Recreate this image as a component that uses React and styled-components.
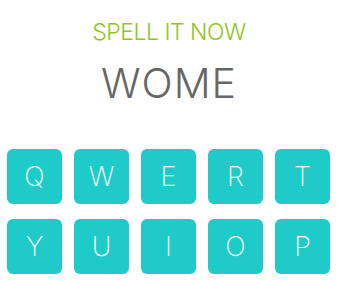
import React from 'react'
import styled, { createGlobalStyle } from 'styled-components'

const GlobalStyle = createGlobalStyle`
  html, body {
    margin: 0;
    padding: 0;
    background: #ffffff;
  }
  body {
    font-family: Inter, 'Liberation Sans', sans-serif;
  }
`

const StyledPage = styled.div`
  display: flex;
  flex-direction: column;
  align-items: center;
  width: 338px;
  height: 281px;
  padding-top: 17px;
  box-sizing: border-box;
`

const StyledTitle = styled.div`
  font-size: 23px;
  font-weight: 300;
  line-height: 30px;
  color: #93c520;
  letter-spacing: -0.5px;
`

const StyledWord = styled.div`
  margin-top: 12px;
  font-size: 41px;
  font-weight: 300;
  line-height: 48px;
  color: #666666;
  letter-spacing: 1px;
`

const StyledKeyboard = styled.div`
  display: grid;
  grid-template-columns: repeat(5, 55px);
  column-gap: 12px;
  row-gap: 15px;
  margin-top: 42px;
  margin-left: -1px;
`

const StyledKey = styled.button`
  display: flex;
  align-items: center;
  justify-content: center;
  width: 55px;
  height: 55px;
  padding: 0;
  border: none;
  border-radius: 6px;
  background-color: #1fcbc8;
  color: #ffffff;
  font-family: Inter, 'Liberation Sans', sans-serif;
  font-size: 27px;
  font-weight: 200;
`

const keys = ['Q', 'W', 'E', 'R', 'T', 'Y', 'U', 'I', 'O', 'P']

export default function App () {
  return (
    <>
      <GlobalStyle />
      <StyledPage>
        <StyledTitle>SPELL IT NOW</StyledTitle>
        <StyledWord>WOME</StyledWord>
        <StyledKeyboard>
          {keys.map((key) => (
            <StyledKey key={key}>{key}</StyledKey>
          ))}
        </StyledKeyboard>
      </StyledPage>
    </>
  )
}
